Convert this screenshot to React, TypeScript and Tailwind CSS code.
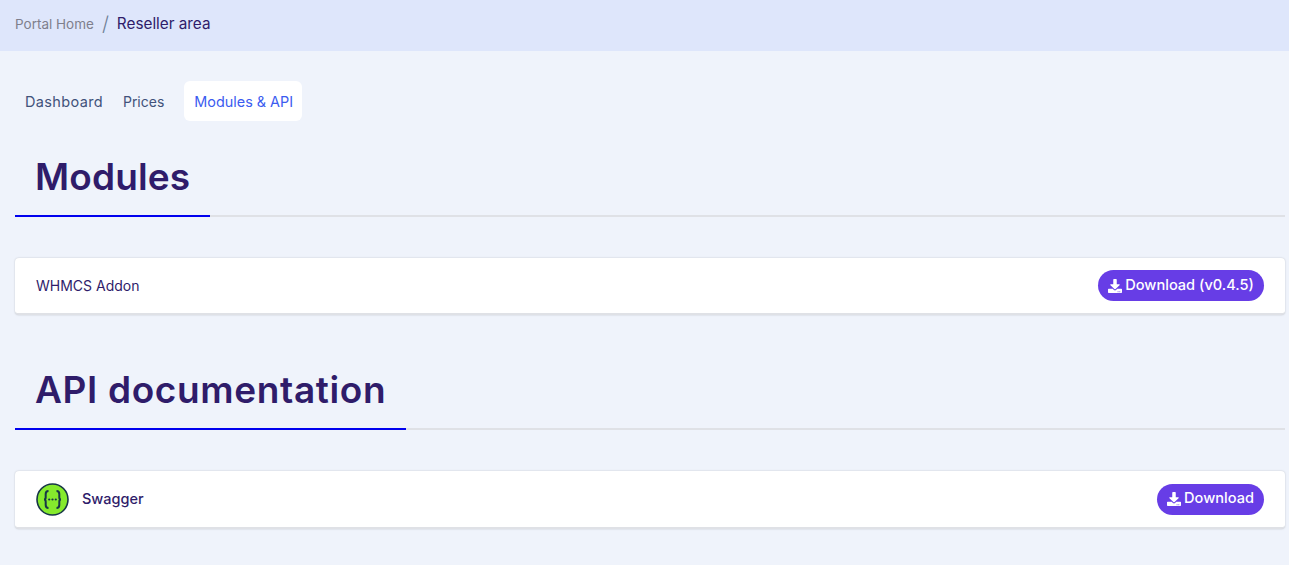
import { FaDownload } from "react-icons/fa"

const font = "font-['Inter','Liberation_Sans',sans-serif]"

function SectionTitle({ children, spacing }: { children: string; spacing: string }) {
  return (
    <div className="flex border-b-2 border-[#dfe1e6]">
      <h2 className={`-mb-[2px] border-b-2 border-[#0000ee] px-5 pb-[11px] text-[37px] font-semibold leading-[54px] text-[#2f1c6a] ${spacing}`}>
        {children}
      </h2>
    </div>
  )
}

function DownloadButton({ label }: { label: string }) {
  return (
    <button className="flex h-[31px] items-center gap-[3px] rounded-full bg-[#673de6] px-[10px] text-[14.6px] font-medium text-white">
      <FaDownload className="h-[14px] w-[14px]" />
      {label}
    </button>
  )
}

export default function App() {
  return (
    <div className={`${font} h-[565px] overflow-hidden bg-[#eff3fb] text-[#2f1c6a]`}>
      {/* Breadcrumb */}
      <div className="flex h-[51px] items-center bg-[#dee6fb] px-[15px] pb-[3px]">
        <span className="text-[13.5px] text-[#7f7f8c]">Portal Home</span>
        <span className="mx-[8px] text-[20px] font-light text-[#6f7f96]">/</span>
        <span className="text-[15.3px]">Reseller area</span>
      </div>

      <div className="px-[15px] pr-1">
        {/* Tabs */}
        <div className="mt-[30px] flex h-10 items-center text-[14px] leading-[21px] text-[#41527a]">
          <span className="px-[10px] text-[14.5px] tracking-[0.35px]">Dashboard</span>
          <span className="px-[10px]">Prices</span>
          <span className="ml-[10px] flex h-10 w-[118px] items-center whitespace-nowrap rounded-md bg-white px-[10px] text-[14.4px] text-[#3b5cf0]">
            Modules &amp; API
          </span>
        </div>

        <div className="mt-[29px]">
          <SectionTitle spacing="tracking-[0.15px]">Modules</SectionTitle>
        </div>

        <div className="mt-[41px] flex h-[57px] items-center justify-between rounded-[4px] border-b-2 border-[#dfe1e6] bg-white px-[21px] text-[14px] shadow-[0_0_2px_rgba(0,0,0,0.2)]">
          <span>WHMCS Addon</span>
          <DownloadButton label="Download (v0.4.5)" />
        </div>

        <div className="mt-[48px]">
          <SectionTitle spacing="tracking-[0.64px]">API documentation</SectionTitle>
        </div>

        <div className="mt-[41px] flex h-[58px] items-center justify-between rounded-[4px] border-b-2 border-[#dfe1e6] bg-white px-[21px] text-[14px] shadow-[0_0_2px_rgba(0,0,0,0.2)]">
          <div className="flex items-center gap-[13px]">
            <svg width="33" height="33" viewBox="0 0 33 33">
              <circle cx="16.5" cy="16.5" r="15.5" fill="#85ea2d" stroke="#173647" strokeWidth="1.6" />
              <path
                d="M12.5 8c-2 0-2.800 1.100-2.800 3v3.200c0 1.400-.6 2.300-1.700 2.300 1.100 0 1.700.9 1.700 2.300V22c0 1.900.8 3 2.800 3M20.500 8c2 0 2.800 1.100 2.800 3v3.200c0 1.400.6 2.300 1.700 2.300-1.100 0-1.700.9-1.700 2.300V22c0 1.900-.8 3-2.800 3"
                fill="none"
                stroke="#173647"
                strokeWidth="2"
              />
              <circle cx="13.200" cy="16.500" r="1.100" fill="#173647" />
              <circle cx="16.500" cy="16.500" r="1.100" fill="#173647" />
              <circle cx="19.800" cy="16.500" r="1.100" fill="#173647" />
            </svg>
            <span className="text-[14.5px] font-medium">Swagger</span>
          </div>
          <DownloadButton label="Download" />
        </div>
      </div>
    </div>
  )
}
